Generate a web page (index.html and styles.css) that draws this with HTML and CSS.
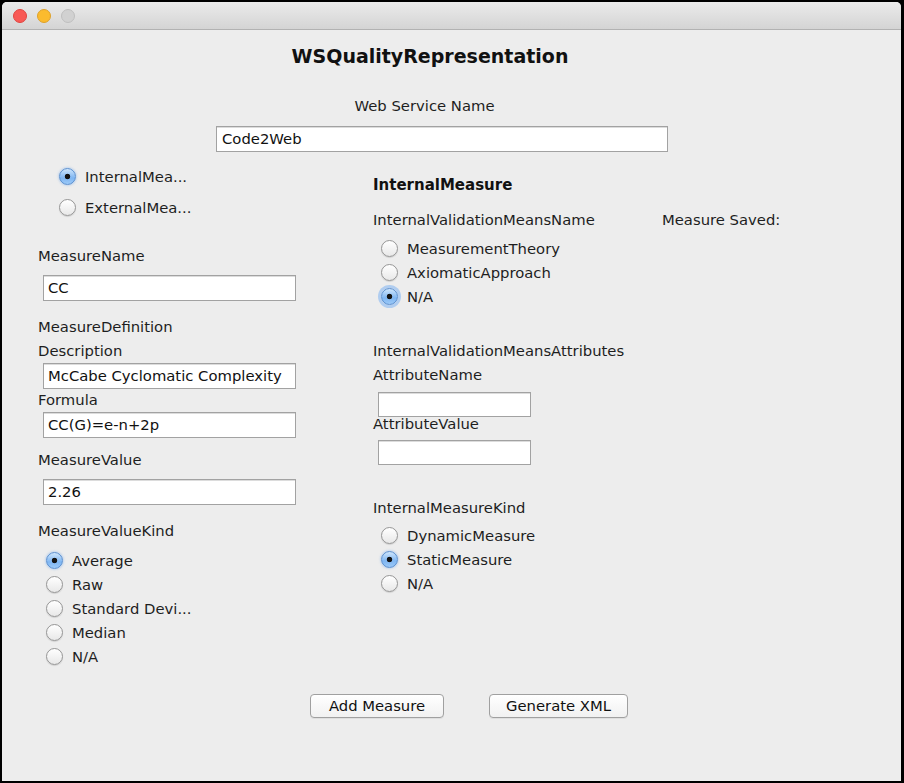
FILE: index.html
```html
<!DOCTYPE html>
<html lang="en">
<head>
<meta charset="utf-8">
<title>WSQualityRepresentation</title>
<link rel="stylesheet" href="styles.css">
</head>
<body>
<div class="window">
  <div class="titlebar">
    <span class="light red"></span>
    <span class="light yellow"></span>
    <span class="light idle"></span>
  </div>
  <div class="content">
    <header class="header">
      <h1 class="title">WSQualityRepresentation</h1>
      <div class="ws-label">Web Service Name</div>
      <div class="field ws-field">Code2Web</div>
    </header>

    <div class="main">
      <div class="col col-left">
        <div class="group group-kind">
          <div class="radio checked"><span class="dot"></span><span>InternalMea...</span></div>
          <div class="radio"><span class="dot"></span><span>ExternalMea...</span></div>
        </div>
        <div class="label gap-30">MeasureName</div>
        <div class="field field-left gap-10">CC</div>
        <div class="label gap-17">MeasureDefinition</div>
        <div class="label gap-6">Description</div>
        <div class="field field-left gap-3">McCabe Cyclomatic Complexity</div>
        <div class="label gap-2">Formula</div>
        <div class="field field-left gap-3">CC(G)=e-n+2p</div>
        <div class="label gap-13">MeasureValue</div>
        <div class="field field-left gap-10">2.26</div>
        <div class="label gap-17">MeasureValueKind</div>
        <div class="group group-list gap-8">
          <div class="radio checked"><span class="dot"></span><span>Average</span></div>
          <div class="radio"><span class="dot"></span><span>Raw</span></div>
          <div class="radio"><span class="dot"></span><span>Standard Devi...</span></div>
          <div class="radio"><span class="dot"></span><span>Median</span></div>
          <div class="radio"><span class="dot"></span><span>N/A</span></div>
        </div>
      </div>

      <div class="col col-right">
        <div class="section-title">InternalMeasure</div>
        <div class="label-row gap-17">
          <div class="label">InternalValidationMeansName</div>
          <div class="label">Measure Saved:</div>
        </div>
        <div class="group group-list gap-7">
          <div class="radio"><span class="dot"></span><span>MeasurementTheory</span></div>
          <div class="radio"><span class="dot"></span><span>AxiomaticApproach</span></div>
          <div class="radio checked focused"><span class="dot"></span><span>N/A</span></div>
        </div>
        <div class="label gap-34">InternalValidationMeansAttributes</div>
        <div class="label gap-6">AttributeName</div>
        <div class="field field-small gap-8"></div>
        <div class="label gap-neg2">AttributeValue</div>
        <div class="field field-small gap-7"></div>
        <div class="label gap-34">InternalMeasureKind</div>
        <div class="group group-list gap-6">
          <div class="radio"><span class="dot"></span><span>DynamicMeasure</span></div>
          <div class="radio checked"><span class="dot"></span><span>StaticMeasure</span></div>
          <div class="radio"><span class="dot"></span><span>N/A</span></div>
        </div>
      </div>
    </div>

    <div class="buttons">
      <button class="btn btn-add">Add Measure</button>
      <button class="btn btn-xml">Generate XML</button>
    </div>
  </div>
</div>
</body>
</html>
```

FILE: styles.css
```css
* { box-sizing: border-box; }

html, body {
  margin: 0;
  padding: 0;
  background: #000;
}

body {
  font-family: "DejaVu Sans", "Noto Sans", sans-serif;
  font-size: 14.8px;
  color: #1e1e1e;
}

.window {
  margin: 2px 3px 2px 2px;
  width: 899px;
  height: 779px;
  background: #ededed;
  border-radius: 5px 5px 0 0;
  overflow: hidden;
  display: flex;
  flex-direction: column;
}

.titlebar {
  height: 28px;
  flex: none;
  background: linear-gradient(#ebebeb, #d4d4d4);
  border-bottom: 1px solid #b2b2b2;
  display: flex;
  align-items: center;
  gap: 10px;
  padding-left: 11px;
}

.light {
  width: 14px;
  height: 14px;
  border-radius: 50%;
  display: block;
}
.light.red { background: #f85955; border: 1px solid #e0443f; }
.light.yellow { background: #fbbb2e; border: 1px solid #dea12a; }
.light.idle { background: #d1d1d1; border: 1px solid #bfbfbf; }

.content {
  flex: 1;
  padding-top: 14px;
}

.header {
  display: flex;
  flex-direction: column;
  align-items: flex-start;
}

.title {
  margin: 0;
  width: 856px;
  text-align: center;
  font-size: 19px;
  line-height: 24px;
  font-weight: bold;
  color: #111;
}

.ws-label {
  margin-top: 29px;
  width: 856px;
  padding-right: 11px;
  text-align: center;
  line-height: 18px;
}

.field {
  background: #fff;
  border: 1px solid #a2a2a2;
  box-shadow: inset 0 1px 0 #dcdcdc;
  height: 26px;
  line-height: 24px;
  padding-left: 4px;
  font-size: 14.8px;
  color: #111;
  white-space: nowrap;
  overflow: hidden;
}

.ws-field {
  margin-top: 11px;
  margin-left: 214px;
  width: 452px;
  padding-left: 5px;
}

.main {
  display: grid;
  grid-template-columns: 335px 1fr;
  padding-left: 36px;
}

.col {
  display: flex;
  flex-direction: column;
  align-items: flex-start;
}

.label {
  line-height: 18px;
  white-space: nowrap;
}

.section-title {
  margin-top: 24px;
  line-height: 18px;
  font-weight: bold;
  font-size: 15px;
  color: #111;
}

.label-row {
  display: grid;
  grid-template-columns: 289px auto;
}

.field-left {
  margin-left: 5px;
  width: 253px;
}

.field-small {
  margin-left: 5px;
  width: 153px;
  height: 25px;
}

.group {
  display: flex;
  flex-direction: column;
  padding-left: 8px;
}

.group-kind {
  margin-top: 14px;
  padding-left: 21px;
  gap: 11px;
}
.group-kind .radio { height: 20px; }

.radio {
  display: flex;
  align-items: center;
  height: 24px;
  white-space: nowrap;
}

.dot {
  width: 17px;
  height: 17px;
  margin-right: 9px;
  border-radius: 50%;
  border: 1px solid #969696;
  background: linear-gradient(#ffffff, #e8e8e8);
  box-shadow: 0 1px 1px rgba(0, 0, 0, 0.12);
  flex: none;
}

.radio.checked .dot {
  border-color: #5a8fd0;
  background:
    radial-gradient(circle at 50% 50%, #141414 0 2.4px, rgba(20,20,20,0) 3.1px),
    linear-gradient(#cfe6fc, #7fb6f2 60%, #9cc9f7);
  box-shadow: 0 0 2px 1px rgba(110, 165, 235, 0.35);
}

.radio.focused .dot {
  box-shadow: 0 0 0 3px rgba(125, 178, 242, 0.55);
}

.gap-neg2 { margin-top: -2px; }
.gap-2 { margin-top: 2px; }
.gap-3 { margin-top: 3px; }
.gap-6 { margin-top: 6px; }
.gap-7 { margin-top: 7px; }
.gap-8 { margin-top: 8px; }
.gap-10 { margin-top: 10px; }
.gap-13 { margin-top: 13px; }
.gap-17 { margin-top: 17px; }
.gap-30 { margin-top: 30px; }
.gap-34 { margin-top: 34px; }

.buttons {
  display: flex;
  gap: 45px;
  margin-top: 26px;
  padding-left: 308px;
}

.btn {
  height: 24px;
  border: 1px solid #a0a0a0;
  border-radius: 4px;
  background: linear-gradient(#ffffff, #f1f1f1);
  box-shadow: 0 1px 0 rgba(0, 0, 0, 0.06);
  font-family: "DejaVu Sans", "Noto Sans", sans-serif;
  font-size: 14.8px;
  line-height: 22px;
  color: #111;
  padding: 0;
  text-align: center;
}
.btn-add { width: 134px; }
.btn-xml { width: 139px; }
```
